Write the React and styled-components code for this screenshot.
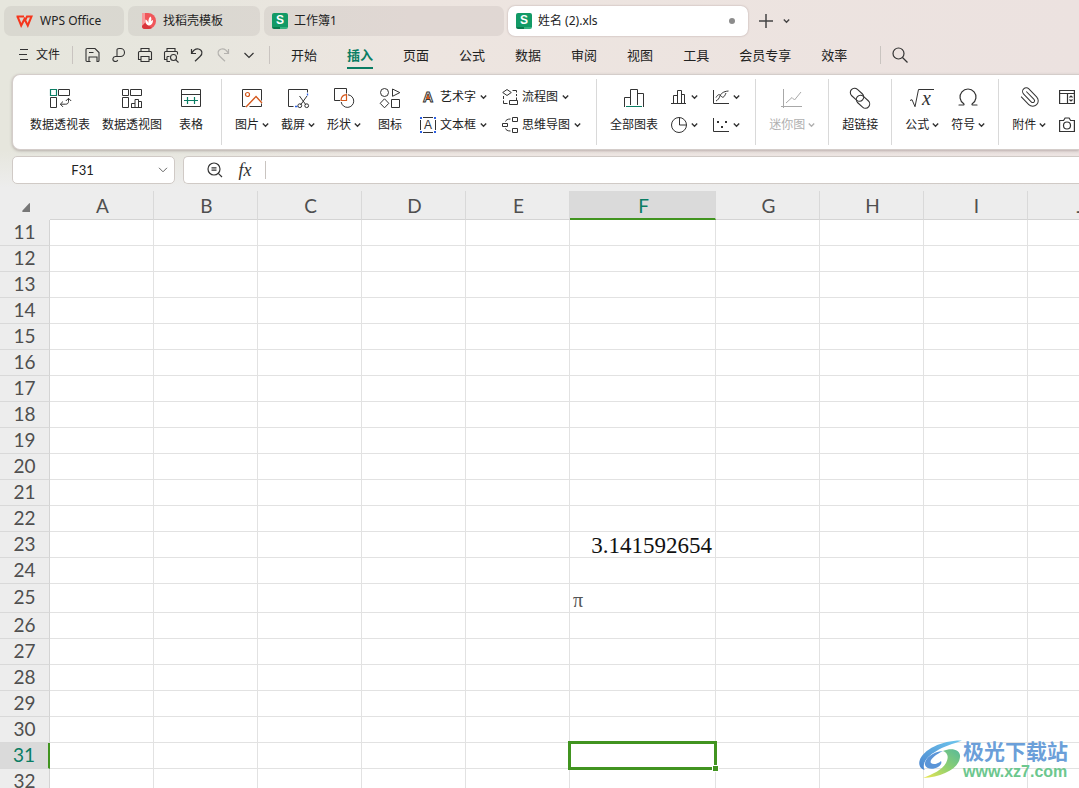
import React from "react";
import styled, { createGlobalStyle, css } from "styled-components";
import { Omega } from "lucide-react";

const ink = "#333";
const teal = "#0a7d63";
const green = "#419420";
const orange = "#d4581c";
const blue = "#2b5fe3";
const uiFont = '"Noto Sans", "Noto Sans CJK SC", sans-serif';
const gridFont = 'Lato, "Noto Sans CJK SC", sans-serif';

const GlobalStyle = createGlobalStyle`
  *, *::before, *::after { box-sizing: border-box; }
  html, body { margin: 0; padding: 0; overflow: hidden; }
  body { font-family: ${uiFont}; color: #222; background: #ededed; }
  button, input { font: inherit; color: inherit; border: 0; padding: 0; margin: 0; background: none; outline: none; }
  button { cursor: pointer; white-space: nowrap; }
`;

/* ---------- Layout ---------- */

const Window = styled.div`
  display: flex;
  flex-direction: column;
  height: 100vh;
  overflow: hidden;
  position: relative;
`;

const Chrome = styled.header`
  flex: none;
  overflow: hidden;
  background:
    linear-gradient(to bottom, rgba(237, 237, 237, 0) 150px, #ededed 188px),
    linear-gradient(to right, #e6e6dd 0, #e7e6de 18%, #ede5e0 38%, #ece2e0 100%);
`;

const TabStrip = styled.div`
  display: flex;
  align-items: center;
  gap: 4px;
  padding: 6px 4px 0;
`;

const Tab = styled.button`
  display: flex;
  align-items: center;
  flex: none;
  gap: ${(p) => (p.$wide ? 6 : 7)}px;
  width: ${(p) => p.$w}px;
  height: 30px;
  padding: 0 ${(p) => (p.$wide ? 13 : 12)}px 0 ${(p) => (p.$wide ? 8 : 12)}px;
  border-radius: 7px;
  font-size: 12px;
  line-height: 16px;
  background: ${(p) => (p.$active ? "#fff" : "rgba(120, 110, 105, 0.11)")};
  box-shadow: ${(p) => (p.$active ? "0 0 2px rgba(90, 60, 60, 0.4)" : "none")};
`;

const UnsavedDot = styled.span`
  width: 6px;
  height: 6px;
  margin-left: auto;
  border-radius: 50%;
  background: #8c8c8c;
`;

const SheetLogo = styled.span`
  width: 16px;
  height: 16px;
  border-radius: 2px;
  background: linear-gradient(#129a66 0 14px, transparent 14px), linear-gradient(to right, #087a4d 50%, #35b17f 50%);
  color: #fff;
  font: bold 12px/15px "Liberation Sans", sans-serif;
  text-align: center;
`;

const PlainButton = styled.button`
  display: flex;
  align-items: center;
  justify-content: center;
  flex: none;
  width: ${(p) => p.$w}px;
  height: 26px;
`;

const MenuBar = styled.nav`
  display: flex;
  align-items: center;
  height: 38px;
  padding-left: 19px;
`;

const FileButton = styled.button`
  display: flex;
  align-items: center;
  gap: 7px;
  font-size: 12px;
  line-height: 18px;
`;

const Rule = styled.span`
  flex: none;
  width: 1px;
  height: 18px;
  margin: 0 ${(p) => p.$right}px 0 ${(p) => p.$left}px;
  background: #c9c4c0;
`;

const MenuItems = styled.div`
  display: flex;
  gap: 30px;
`;

const MenuItem = styled.button`
  flex: none;
  height: 28px;
  padding-bottom: 1px;
  padding-top: 2px;
  border-bottom: 2px solid ${(p) => (p.$active ? teal : "transparent")};
  color: ${(p) => (p.$active ? teal : "#222")};
  font-size: 13px;
  line-height: 18px;
  font-weight: ${(p) => (p.$active ? 700 : 400)};
`;

const Ribbon = styled.section`
  display: flex;
  margin-left: 12px;
  height: 76px;
  padding-left: 4px;
  border: 1px solid #d4cdca;
  border-right: 0;
  border-radius: 8px 0 0 8px;
  background: #fff;
  box-shadow: 0 1px 3px rgba(70, 50, 50, 0.3);
  overflow: hidden;
`;

const Group = styled.div`
  display: flex;
  flex: none;
  padding: 0 7px;
  & + &::before {
    content: "";
    align-self: center;
    width: 1px;
    height: 66px;
    margin: 0 7px 0 -7px;
    background: #d9d9d9;
  }
`;

const BigButton = styled.button`
  display: flex;
  flex-direction: column;
  align-items: center;
  gap: 4px;
  min-width: 46px;
  padding: 10px 6px 0;
  font-size: 12px;
  line-height: 24px;
  color: ${(p) => (p.$off ? "#b0b0b0" : "#222")};
`;

const Caption = styled.span`
  display: flex;
  align-items: center;
  gap: 3px;
`;

const Stack = styled.div`
  display: flex;
  flex-direction: column;
  gap: 4px;
  padding: 10px 8px 0 7px;
`;

const SmallButton = styled.button`
  display: flex;
  align-items: center;
  gap: 4px;
  height: 24px;
  font-size: 12px;
  line-height: 24px;
`;

const FormulaRow = styled.div`
  display: flex;
  gap: 8px;
  padding: 6px 0 7px 12px;
`;

const Field = styled.div`
  display: flex;
  align-items: center;
  height: 28px;
  border: 1px solid #d0cac6;
  border-radius: ${(p) => (p.$grow ? "5px 0 0 5px" : "5px")};
  background: #fff;
  ${(p) =>
    p.$grow
      ? css`
          flex: 1;
          border-right: 0;
          padding-left: 18px;
        `
      : css`
          width: 163px;
        `}
`;

const NameInput = styled.input`
  flex: 1;
  min-width: 0;
  text-align: center;
  font-family: ${gridFont};
  font-size: 13px;
`;

const FormulaInput = styled.input`
  flex: 1;
  min-width: 0;
  font-size: 13px;
`;

const FxButton = styled(PlainButton)`
  font: italic 18px/24px "Liberation Serif", serif;
  color: #333;
`;

/* ---------- Sheet ---------- */

const SheetArea = styled.main`
  flex: 1;
  min-height: 0;
  overflow: hidden;
  background: #fff;
`;

const Sheet = styled.table`
  width: 1132px;
  table-layout: fixed;
  border-collapse: separate;
  border-spacing: 0;
`;

const ColHead = styled.th`
  height: 29px;
  padding: 2px 0 0 2px;
  background: ${(p) => (p.$on ? "#dadada" : "#ededed")};
  border-right: 1px solid #d9d9d9;
  border-bottom: ${(p) => (p.$on ? `2px solid ${green}` : "1px solid #d4d4d4")};
  color: ${(p) => (p.$on ? teal : "#4f4f4f")};
  font: 400 19px/24px ${gridFont};
`;

const Corner = styled(ColHead)`
  border-right-color: #ededed;
  border-bottom-color: #ededed;
  padding: 4px 20px 0 22px;
  line-height: 0;
`;

const RowHead = styled.th`
  height: ${(p) => p.$h}px;
  padding: 0 0 2px;
  background: ${(p) => (p.$on ? "#dadada" : "#ededed")};
  border-bottom: 1px solid #d9d9d9;
  border-right: ${(p) => (p.$on ? `2px solid ${green}` : "1px solid #d4d4d4")};
  color: ${(p) => (p.$on ? teal : "#4f4f4f")};
  font: 400 19px/22px ${gridFont};
`;

const Cell = styled.td`
  padding: 3px 3px 0;
  border-right: 1px solid #e2e2e2;
  border-bottom: 1px solid #e2e2e2;
  color: #111;
  font: 23px/22px "Liberation Serif", serif;
  text-align: right;
  ${(p) =>
    p.$symbol &&
    css`
      color: #555;
      font-size: 20px;
      text-align: left;
    `}
  ${(p) =>
    p.$selected &&
    css`
      position: relative;
      &::before {
        content: "";
        position: absolute;
        inset: -2px;
        border: 3px solid ${green};
      }
      &::after {
        content: "";
        position: absolute;
        right: -4px;
        bottom: -4px;
        width: 7px;
        height: 7px;
        border: 1px solid #fff;
        background: ${green};
      }
    `}
`;

/* ---------- Watermark ---------- */

const Watermark = styled.div`
  position: absolute;
  right: 11px;
  bottom: 7px;
  display: flex;
  align-items: flex-end;
  pointer-events: none;
`;

const SiteName = styled.div`
  color: #6b9fd9;
  font: 700 21px/26px "Noto Sans CJK SC", sans-serif;
`;

const SiteUrl = styled.div`
  color: #6cc78e;
  font: 700 16px/18px "Liberation Sans", sans-serif;
`;

/* ---------- Icons ---------- */

const Svg = styled.svg`
  display: block;
  flex: none;
  fill: none;
  stroke: ${(p) => p.$color || ink};
  stroke-width: ${(p) => p.$sw || 1};
`;

const Big = ({ children, color, sw }) => (
  <Svg width="24" height="24" viewBox="0 0 24 24" $color={color} $sw={sw} aria-hidden="true">{children}</Svg>
);
const Small = ({ children, color, sw }) => (
  <Svg width="16" height="16" viewBox="0 0 16 16" $color={color} $sw={sw} aria-hidden="true">{children}</Svg>
);
const Caret = ({ color }) => (
  <Svg width="7" height="6" viewBox="0 0 7 6" $color={color} $sw="1.4" aria-hidden="true"><path d="M.8 1.6 3.5 4.2 6.2 1.6" /></Svg>
);

const icons = {
  pivotTable: (
    <Big>
      <path d="M2.5 4.5h6v6h-6z" stroke={teal} strokeWidth="1.2" />
      <path d="M10.5 4.5h11v6h-11zM2.5 12.5h6v10h-6z" />
      <path d="M15 16.500l-2.700 2.700 2.700 2.700M12.500 19.200h5.200c1.700 0 2.800-1 2.800-2.700v-3M17.800 16l2.700-2.700 2.700 2.700" />
    </Big>
  ),
  pivotChart: (
    <Big>
      <path d="M2.5 4.5h6v6h-6zM10.5 4.5h11v6h-11zM2.5 12.5h6v10h-6z" />
      <path d="M11 22.5h11M11.5 22.5v-4h3.500M15 22.5v-8h3.500v8M18.500 16.500h3v6" />
    </Big>
  ),
  table: (
    <Big>
      <path d="M2.5 4.5h19v17h-19zM2.5 9.5h19" />
      <path d="M5 15.5h14M8.5 12v7M15.5 12v7" stroke={teal} strokeWidth="1.2" />
    </Big>
  ),
  picture: (
    <Big>
      <path d="M5.5 21.5h-3v-17h19v11M9.5 21.5h12v-3" />
      <circle cx="7.5" cy="9.5" r="2" stroke={orange} strokeWidth="1.2" />
      <path d="M6 22l10-10.500 6 6.500" stroke={orange} strokeWidth="1.3" />
    </Big>
  ),
  screenshot: (
    <Big>
      <path d="M7.5 21.5h-5v-17h19v3" />
      <path d="M21.5 8.500v2M9 21.5h2.500" stroke={blue} strokeWidth="1.3" />
      <path d="M13.500 11l6.500 9M21 11l-6.500 9" />
      <circle cx="13.8" cy="20.7" r="1.9" />
      <circle cx="20.7" cy="20.7" r="1.9" />
    </Big>
  ),
  shapes: (
    <Big>
      <path d="M8 15.500H2.500v-12h12V8.500" />
      <path d="M16 9.800a6.300 6.300 0 1 1-6.800 7.200" />
      <path d="M9 15.500c.200-3.200 2.500-5.500 5.500-5.800v5.800z" stroke={orange} strokeWidth="1.2" />
    </Big>
  ),
  iconSet: (
    <Big>
      <circle cx="6.5" cy="7.5" r="4" />
      <path d="M14.500 4l7.300 3.600-7.300 3.700zM6.500 13.800l4.300 4.500-4.300 4.500-4.300-4.500zM13.500 14.500h8v8h-8z" />
    </Big>
  ),
  allCharts: (
    <Big>
      <path d="M2.500 22v-9.500h6M8.500 20V4.500h7V20M15.500 8.500h6V22" />
      <path d="M4 21.500h16" stroke={teal} />
    </Big>
  ),
  sparkline: (
    <Big color="#a8a8a8">
      <path d="M3.500 4v19M1 21.500h21M6 18l6-5.500 2.500 2.500L21 7" />
    </Big>
  ),
  link: (
    <Big sw="1.1">
      <rect x="1.5" y="5.5" width="15" height="8.500" rx="4.250" transform="rotate(42 9 9.750)" />
      <rect x="7.500" y="12.500" width="15" height="8.500" rx="4.250" transform="rotate(42 15 16.750)" />
    </Big>
  ),
  formula: (
    <Big>
      <path d="M0 15.500l2-.8 3 7L8.500 4.500H24" />
      <text x="12" y="20" fill={ink} stroke="none" fontFamily="Liberation Serif, serif" fontStyle="italic" fontSize="20">x</text>
    </Big>
  ),
  clip: (
    <Big sw="1.1">
      <path transform="translate(24 1) scale(-.92 .92)" d="m16 6-8.414 8.586a2 2 0 0 0 2.829 2.829l8.414-8.586a4 4 0 1 0-5.657-5.657l-8.379 8.551a6 6 0 1 0 8.485 8.485l8.379-8.551" />
    </Big>
  ),
  wordArt: (
    <Small>
      <text x="8" y="13" textAnchor="middle" fill="#fff" stroke={ink} strokeWidth="1" fontFamily="Liberation Sans, sans-serif" fontWeight="700" fontSize="14">A</text>
      <path d="M8 5l2 5H6z" fill={orange} stroke="none" />
    </Small>
  ),
  textBox: (
    <Small>
      <path d="M3 .5h10M3 15.500h10M.5 3v10M15.500 3v10" />
      <path d="M0 0h2v2H0zM14 0h2v2h-2zM0 14h2v2H0zM14 14h2v2h-2z" fill={blue} stroke="none" />
      <text x="8" y="12" textAnchor="middle" fill={ink} stroke="none" fontFamily="Liberation Sans, sans-serif" fontSize="12">A</text>
    </Small>
  ),
  flow: (
    <Small>
      <path d="M5 .5l4.300 3L5 6.500.7 3.500zM7.500 11.500h8v4h-8zM10.500 1.500h4v2M14.500 5v2M14.500 8.500v3M1.500 7v3M1.500 11.500v3h4" />
    </Small>
  ),
  mindMap: (
    <Small>
      <path d="M.5 6.500h5v3h-5zM10.500 .5h5v4h-5zM10.500 11.500h5v4h-5zM3.500 4.500c.500-1.500 2-2.500 5-2.500M3.500 11.500c.500 1.500 2 2.500 5 2.500" />
    </Small>
  ),
  column: (
    <Small>
      <path d="M0 14.500h15M2.500 14.500v-8h4M6.500 14.500v-13h4v13M10.500 5.500h3v9" />
    </Small>
  ),
  pie: (
    <Small>
      <circle cx="8" cy="8" r="7.5" />
      <path d="M8.500 .5v7.500h7" />
    </Small>
  ),
  line: (
    <Small>
      <path d="M.5 1v13.500H16M3 12c2-1 3-2.500 4-5s3-4.500 8.500-5M3 8.500c2-3.500 3.500-3.500 5-1.500s3 2 5-3" />
    </Small>
  ),
  scatter: (
    <Small>
      <path d="M.5 1v13.500H16" />
      <path d="M4 4h2v2H4zM8 9h2v2H8zM12 4h2v2h-2z" fill={ink} stroke="none" />
    </Small>
  ),
  pane: (
    <Small sw="1.2">
      <path d="M.6 1.500h14.800v13H.6zM.5 4.500h15M8.500 4.500v10M10.500 8.500l1.500-1.500 1.500 1.500M10.500 10.500l1.500 1.500 1.500-1.500" />
    </Small>
  ),
  camera: (
    <Small sw="1.2">
      <path d="M.6 3.500h4l1.500-2.500h4l1.500 2.500h3.800v11H.6z" />
      <circle cx="8" cy="8.5" r="3.5" />
    </Small>
  ),
};

const quickIcons = [
  ["保存", <Small key="i" sw="1.1"><path d="M5.500 14.500h-3.500a1 1 0 0 1-1-1v-11a1 1 0 0 1 1-1h8l4 4v8a1 1 0 0 1-1 1h-1.500M4 14.500v-4.500h8v4.500M4 5.500h4.500" /></Small>],
  ["输出", <Small key="i" sw="1.1"><path d="M6 10V2.500C6 1.500 6.500 1.500 8 1.500h1.500a4 4 0 0 1 0 8H4.500a2.500 2.500 0 1 0 2.200 3.500" /></Small>],
  ["打印", <Small key="i" sw="1.1"><path d="M4 4.500v-3h8v3M4 12.500H1.500v-7c0-.5.500-1 1-1h11c.5 0 1 .5 1 1v7H12M4 9.500h8v5H4z" /></Small>],
  ["打印预览", <Small key="i" sw="1.1"><path d="M4 4.500v-3h8v3M4 12.500H1.500v-7c0-.5.500-1 1-1h11c.5 0 1 .5 1 1v2M4 9.500h2.500M4 9.500v5h3" /><circle cx="10.5" cy="10.5" r="3" /><path d="M12.800 12.800l2.700 2.700" /></Small>],
  ["撤销", <Small key="i" sw="1.2"><path d="M2.500 2v4.500H7M2.500 6.500C4.500 3 7 1.500 9.500 2c4 .8 4.500 5 1.500 7.500l-5 4.800" /></Small>],
  ["恢复", <Small key="i" color="#b5b3af" sw="1.2"><path d="M13.500 2v4.500H9M13.500 6.500C11.500 3 9 1.500 6.500 2c-4 .8-4.500 5-1.500 7.500l5 4.800" /></Small>],
  ["更多", <Small key="i" sw="1.2"><path d="M3.500 6l4.500 4.500L12.500 6" /></Small>],
];

const WpsLogo = () => (
  <Svg width="17" height="16" viewBox="0 0 17 16" $color="#f5361d" $sw="2" aria-hidden="true">
    <path d="M.5 3.500h7.500M1.500 3.500l3.700 9L8.500 6l3.300 6.500 3.700-9h-4.500L8.800 8" />
  </Svg>
);

const DocerLogo = () => (
  <Svg width="16" height="16" viewBox="0 0 16 16" $color="none" aria-hidden="true">
    <path d="M2 0h6a8 8 0 0 1 0 16H5a3 3 0 0 1-3-3z" fill="#f0565a" />
    <path d="M2 0h3v10l-3 3z" fill="#f79a9b" />
    <path d="M2 13l3-3 7 5a8 8 0 0 1-4 1H5a3 3 0 0 1-3-3z" fill="#d9363c" />
    <path d="M9 12.500C6 12 5 9 5.500 6.500c1.500.5 2.500 2 3 3.500C8.200 7 9 4.500 10.500 3.500c1.300 1.500 1 3.500.2 5 .8-.8 1.500-1.300 2.300-1.500.2 3-1.300 5.200-4 5.500z" fill="#fff" />
  </Svg>
);

const SwooshLogo = () => (
  <Svg width="44" height="42" viewBox="0 0 44 42" $color="none" aria-hidden="true">
    <defs>
      <linearGradient id="swooshBlue" x1="0" y1="1" x2="1" y2="0">
        <stop offset="0" stopColor="#4d86cf" />
        <stop offset="1" stopColor="#6ec8ee" />
      </linearGradient>
      <linearGradient id="swooshGreen" x1="0" y1="1" x2="1" y2="0">
        <stop offset="0" stopColor="#efe64f" />
        <stop offset=".5" stopColor="#8fd070" />
        <stop offset="1" stopColor="#57b99a" />
      </linearGradient>
    </defs>
    <path d="M43 1.500C24 1 4 10 .5 22c-1 4 1 8 5 9-3-7 3-14 12-19C25 7 34 5 43 1.500z" fill="url(#swooshBlue)" />
    <path d="M24 12C13 13 5 20 6 26c1 4 8 5 13 2 3-2 4-4 3-6-3 3-8 4-10 2-2-3 4-8 12-12z" fill="#5b95d8" />
    <path d="M24 12c9-4 18-1 17 6-1 12-18 20-37 21 10-4 19-8 23-15 3-6 2-10-3-12z" fill="url(#swooshGreen)" />
  </Svg>
);

/* ---------- Parts ---------- */

const Large = ({ icon, label, caret, off }) => (
  <BigButton $off={off} disabled={off}>
    {icon}
    <Caption>
      {label}
      {caret && <Caret color={off ? "#b0b0b0" : undefined} />}
    </Caption>
  </BigButton>
);

const Compact = ({ icon, label, name, caret = true }) => (
  <SmallButton aria-label={label ? undefined : name}>
    {icon}
    {label}
    {caret && <Caret />}
  </SmallButton>
);

const menus = ["开始", "插入", "页面", "公式", "数据", "审阅", "视图", "工具", "会员专享", "效率"];
const columns = ["A", "B", "C", "D", "E", "F", "G", "H", "I", "J"];
const rows = Array.from({ length: 22 }, (_, i) => i + 11);
const values = { F23: "3.141592654", F25: "π" };

export default function App() {
  return (
    <Window>
      <GlobalStyle />
      <Chrome>
        <TabStrip>
          <Tab $w={120}><WpsLogo />WPS Office</Tab>
          <Tab $w={132}><DocerLogo />找稻壳模板</Tab>
          <Tab $w={240} $wide><SheetLogo>S</SheetLogo>工作簿1</Tab>
          <Tab $w={240} $wide $active><SheetLogo>S</SheetLogo>姓名 (2).xls<UnsavedDot /></Tab>
          <PlainButton $w={28} aria-label="新建">
            <Small sw="1.5" color="#444"><path d="M8 1v14M1 8h14" /></Small>
          </PlainButton>
          <PlainButton $w={4} aria-label="标签列表"><Caret color="#444" /></PlainButton>
        </TabStrip>

        <MenuBar>
          <FileButton>
            <Svg width="10" height="12" viewBox="0 0 10 12" aria-hidden="true"><path d="M1 .5h8M0 5.500h8M1 10.500h8" /></Svg>
            文件
          </FileButton>
          <Rule $left={12} $right={7} />
          {quickIcons.map(([name, icon]) => (
            <PlainButton key={name} $w={26} aria-label={name}>{icon}</PlainButton>
          ))}
          <Rule $left={7} $right={21} />
          <MenuItems>
            {menus.map((m) => <MenuItem key={m} $active={m === "插入"}>{m}</MenuItem>)}
          </MenuItems>
          <Rule $left={33} $right={6} />
          <PlainButton $w={26} aria-label="搜索">
            <Small sw="1.2"><circle cx="6.5" cy="6.5" r="5.5" /><path d="M10.500 10.500l5 5" /></Small>
          </PlainButton>
        </MenuBar>

        <Ribbon>
          <Group>
            <Large icon={icons.pivotTable} label="数据透视表" />
            <Large icon={icons.pivotChart} label="数据透视图" />
            <Large icon={icons.table} label="表格" />
          </Group>
          <Group>
            <Large icon={icons.picture} label="图片" caret />
            <Large icon={icons.screenshot} label="截屏" caret />
            <Large icon={icons.shapes} label="形状" caret />
            <Large icon={icons.iconSet} label="图标" />
            <Stack>
              <Compact icon={icons.wordArt} label="艺术字" />
              <Compact icon={icons.textBox} label="文本框" />
            </Stack>
            <Stack>
              <Compact icon={icons.flow} label="流程图" />
              <Compact icon={icons.mindMap} label="思维导图" />
            </Stack>
          </Group>
          <Group>
            <Large icon={icons.allCharts} label="全部图表" />
            <Stack>
              <Compact icon={icons.column} name="柱形图" />
              <Compact icon={icons.pie} name="饼图" />
            </Stack>
            <Stack>
              <Compact icon={icons.line} name="折线图" />
              <Compact icon={icons.scatter} name="散点图" />
            </Stack>
          </Group>
          <Group>
            <Large icon={icons.sparkline} label="迷你图" caret off />
          </Group>
          <Group>
            <Large icon={icons.link} label="超链接" />
          </Group>
          <Group>
            <Large icon={icons.formula} label="公式" caret />
            <Large icon={<Omega size={24} strokeWidth={1.2} color={ink} aria-hidden="true" />} label="符号" caret />
          </Group>
          <Group>
            <Large icon={icons.clip} label="附件" caret />
            <Stack>
              <Compact icon={icons.pane} name="窗体" caret={false} />
              <Compact icon={icons.camera} name="照相机" caret={false} />
            </Stack>
          </Group>
        </Ribbon>

        <FormulaRow>
          <Field>
            <NameInput aria-label="名称框" defaultValue="F31" />
            <PlainButton $w={22} aria-label="展开名称">
              <Svg width="10" height="6" viewBox="0 0 10 6" $color="#666" aria-hidden="true"><path d="M1 .8l4 4 4-4" /></Svg>
            </PlainButton>
          </Field>
          <Field $grow>
            <PlainButton $w={26} aria-label="查找">
              <Small sw="1.2"><circle cx="7" cy="7" r="6" /><path d="M11.300 11.300l3.700 3.700M4.500 5.800h5M4.500 8.200h5" /></Small>
            </PlainButton>
            <FxButton $w={34} aria-label="插入函数">fx</FxButton>
            <Rule $left={3} $right={8} />
            <FormulaInput aria-label="编辑栏" />
          </Field>
        </FormulaRow>
      </Chrome>

      <SheetArea>
        <Sheet>
          <colgroup>
            <col width="50" />
            {columns.map((c) => <col key={c} width={c === "F" ? 146 : 104} />)}
          </colgroup>
          <thead>
            <tr>
              <Corner aria-label="全选">
                <Svg width="8" height="9" viewBox="0 0 8 9" $color="none" aria-hidden="true"><path d="M8 0v9H1C0 9 0 8 .5 7.500L7 .5z" fill="#777" /></Svg>
              </Corner>
              {columns.map((c) => <ColHead key={c} scope="col" $on={c === "F"}>{c}</ColHead>)}
            </tr>
          </thead>
          <tbody>
            {rows.map((r) => (
              <tr key={r}>
                <RowHead scope="row" $h={r === 25 ? 29 : 26} $on={r === 31}>{r}</RowHead>
                {columns.map((c) => (
                  <Cell key={c} $selected={c + r === "F31"} $symbol={c + r === "F25"}>{values[c + r]}</Cell>
                ))}
              </tr>
            ))}
          </tbody>
        </Sheet>
      </SheetArea>

      <Watermark>
        <SwooshLogo />
        <div>
          <SiteName>极光下载站</SiteName>
          <SiteUrl>www.xz7.com</SiteUrl>
        </div>
      </Watermark>
    </Window>
  );
}
